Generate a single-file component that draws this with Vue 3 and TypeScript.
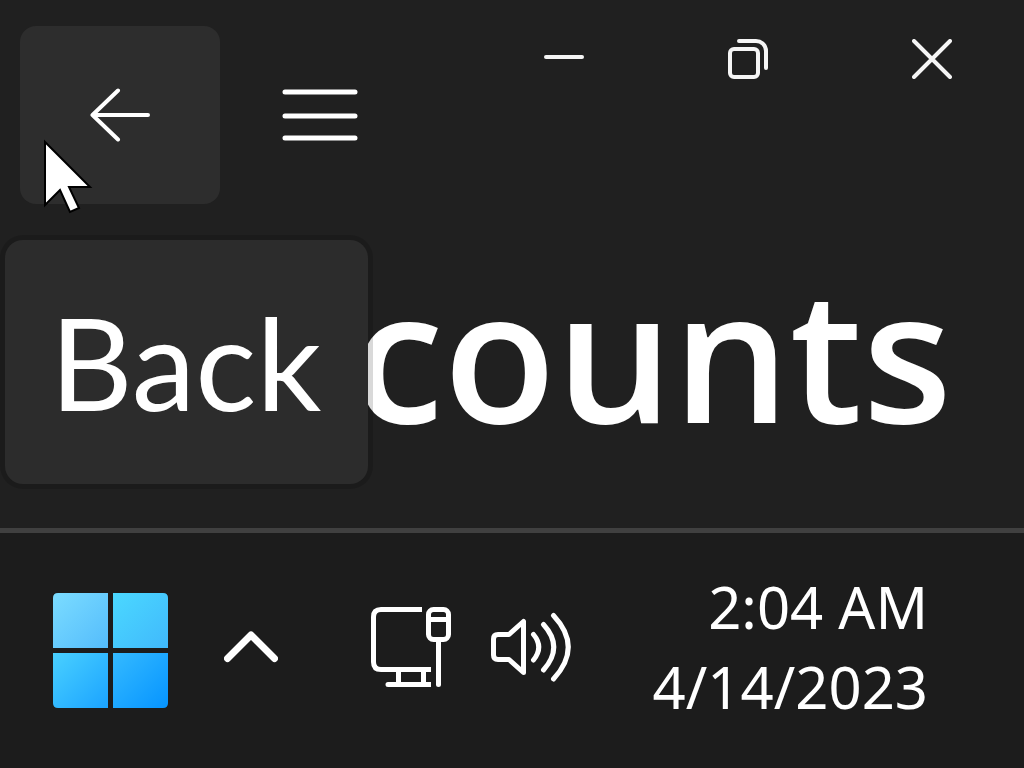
<script setup lang="ts">
const time = '2:04 AM'
const date = '4/14/2023'
</script>

<template>
  <div class="desktop">
    <main class="window">
      <header class="titlebar">
        <nav class="nav">
          <button class="back" type="button" aria-label="Back" aria-describedby="tip">
            <svg width="60" height="54" viewBox="0 0 60 54">
              <path d="M28 2.500 2.500 27 28 51.500M2.500 27H58" />
            </svg>
          </button>
          <button class="menu" type="button" aria-label="Menu">
            <svg width="76" height="54" viewBox="0 0 76 54">
              <path d="M3 4H73M3 28H73M3 50H73" />
            </svg>
          </button>
        </nav>
        <div class="controls">
          <button type="button" aria-label="Minimize">
            <svg width="40" height="40" viewBox="0 0 40 40"><path d="M2 18H38" /></svg>
          </button>
          <button type="button" aria-label="Restore">
            <svg width="40" height="40" viewBox="0 0 40 40">
              <rect x="2" y="10" width="28" height="28" rx="4" />
              <path d="M11 2H28A10 10 0 0 1 38 12V29" />
            </svg>
          </button>
          <button type="button" aria-label="Close">
            <svg width="40" height="40" viewBox="0 0 40 40"><path d="M2 2 38 38M38 2 2 38" /></svg>
          </button>
        </div>
      </header>
      <h1 class="heading">counts</h1>
      <div id="tip" class="tooltip" role="tooltip">Back</div>
      <svg class="cursor" width="50" height="76" viewBox="0 0 50 76">
        <path d="M2 3V66L17 51 27 73 36 69 26 48H47Z" />
      </svg>
    </main>

    <footer class="taskbar">
      <button class="start" type="button" aria-label="Start">
        <svg width="116" height="116" viewBox="0 0 116 116">
          <defs>
            <linearGradient id="g1" x1="0" y1="0" x2="1" y2="1">
              <stop offset="0" stop-color="#7bdcff" /><stop offset="1" stop-color="#54bcfc" />
            </linearGradient>
            <linearGradient id="g2" x1="0" y1="0" x2="1" y2="1">
              <stop offset="0" stop-color="#4bd8ff" /><stop offset="1" stop-color="#40b9fc" />
            </linearGradient>
            <linearGradient id="g3" x1="0" y1="0" x2="1" y2="1">
              <stop offset="0" stop-color="#49d0ff" /><stop offset="1" stop-color="#1ba3ff" />
            </linearGradient>
            <linearGradient id="g4" x1="0" y1="0" x2="1" y2="1">
              <stop offset="0" stop-color="#34baff" /><stop offset="1" stop-color="#0694ff" />
            </linearGradient>
          </defs>
          <path fill="url(#g1)" d="M5 0H55V55H0V5Q0 0 5 0Z" />
          <path fill="url(#g2)" d="M60 0H110Q115 0 115 5V55H60Z" />
          <path fill="url(#g3)" d="M0 60H55V115H5Q0 115 0 110Z" />
          <path fill="url(#g4)" d="M60 60H115V110Q115 115 110 115H60Z" />
        </svg>
      </button>
      <div class="tray">
        <button class="chevron" type="button" aria-label="Show hidden icons">
          <svg width="54" height="32" viewBox="0 0 54 32"><path d="M3.500 27.500 27 4 50.500 27.500" /></svg>
        </button>
        <button class="status" type="button" aria-label="Network and volume">
          <svg width="81" height="80" viewBox="0 0 81 80">
            <g class="butt">
              <path d="M51 2.500H10Q2.500 2.500 2.500 10V55Q2.500 62.500 10 62.500H60" />
              <path d="M27.500 62V77M52.500 62V77M40 77.500H60" />
              <rect x="57.500" y="2.500" width="20" height="30" rx="5" />
              <path d="M57.500 12.500H77.500" />
            </g>
            <path d="M17 77.500H50M67.500 34V77.500" />
          </svg>
          <svg width="81" height="80" viewBox="0 0 81 80">
            <path d="M2.500 32Q2.500 27.500 7 27.500H18L32.500 14.500V65.500L18 52.500H7Q2.500 52.500 2.500 48Z" />
            <path d="M42.500 27.500Q53 40 42.500 53M52.500 17.500Q73 40 52.500 63M62.500 8.500Q92 40 62.500 72" />
          </svg>
        </button>
        <div class="clock">
          <time>{{ time }}</time>
          <time>{{ date }}</time>
        </div>
      </div>
    </footer>
  </div>
</template>

<style>
body {
  background: #202020;
}
</style>

<style scoped>
.desktop {
  min-height: 100vh;
  display: flex;
  flex-direction: column;
  color: #fff;
  font-family: "Noto Sans", "Open Sans", sans-serif;
}

button {
  display: flex;
  align-items: center;
  justify-content: center;
  padding: 0;
  border: 0;
  background: none;
  color: #fff;
}

svg {
  display: block;
  flex: none;
  fill: none;
  stroke: currentColor;
  stroke-width: 4;
  stroke-linecap: round;
  stroke-linejoin: round;
}

.window {
  position: relative;
  background: #202020;
  padding-bottom: 56px;
}

.titlebar {
  display: flex;
  justify-content: space-between;
  align-items: flex-start;
}

.nav {
  display: flex;
  padding: 26px 0 0 20px;
}

.back {
  width: 200px;
  height: 178px;
  border-radius: 16px;
  background: #2d2d2d;
}

.menu {
  width: 200px;
  height: 178px;
}

.menu svg {
  stroke-width: 5;
}

.controls {
  display: flex;
  flex: 0 1 552px;
}

.controls button {
  flex: 1;
  height: 118px;
  color: #f5f5f5;
}

.heading {
  margin: 28px 72px 0 0;
  text-align: right;
  font-family: "Open Sans", "Noto Sans", sans-serif;
  font-size: 184px;
  font-weight: 600;
  line-height: 240px;
}

.tooltip {
  position: absolute;
  left: 5px;
  top: 240px;
  box-sizing: border-box;
  width: 363px;
  height: 244px;
  padding-left: 45px;
  border-radius: 18px;
  background: #2c2c2c;
  box-shadow: 0 0 0 5px rgba(0, 0, 0, 0.15);
  font-family: Lato, "Open Sans", sans-serif;
  font-size: 128px;
  line-height: 244px;
}

.cursor {
  position: absolute;
  left: 43px;
  top: 139px;
  fill: #fff;
  stroke: #000;
  stroke-width: 2;
  stroke-linejoin: miter;
}

.taskbar {
  flex: 1;
  display: flex;
  align-items: center;
  padding: 0 96px 0 53px;
  border-top: 5px solid #404040;
  background: #1c1c1c;
}

.start svg {
  stroke: none;
}

.tray {
  flex: 1;
  display: flex;
  align-items: center;
  margin-left: 55px;
  padding-bottom: 8px;
}

.chevron svg {
  stroke-width: 7;
}

.status {
  gap: 39px;
  margin-left: 93px;
}

.status svg {
  stroke-width: 5;
}

.butt {
  stroke-linecap: butt;
}

.clock {
  display: flex;
  flex-direction: column;
  margin-left: auto;
  text-align: right;
  font-size: 58px;
  line-height: 80px;
}
</style>
